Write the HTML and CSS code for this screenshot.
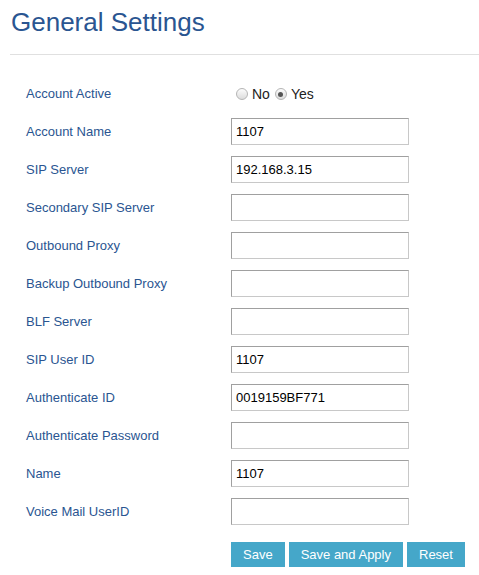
FILE: index.html
```html
<!DOCTYPE html>
<html>
<head>
<meta charset="utf-8">
<link rel="stylesheet" href="styles.css">
</head>
<body>
<div class="page">
  <h1 class="title">General Settings</h1>
  <div class="divider"></div>
  <form class="form">
    <div class="row">
      <label class="label">Account Active</label>
      <div class="field radios">
        <span class="radio"></span><span class="rtext">No</span>
        <span class="radio checked"></span><span class="rtext">Yes</span>
      </div>
    </div>
    <div class="row"><label class="label">Account Name</label><div class="field"><input class="input" value="1107"></div></div>
    <div class="row"><label class="label">SIP Server</label><div class="field"><input class="input" value="192.168.3.15"></div></div>
    <div class="row"><label class="label">Secondary SIP Server</label><div class="field"><input class="input" value=""></div></div>
    <div class="row"><label class="label">Outbound Proxy</label><div class="field"><input class="input" value=""></div></div>
    <div class="row"><label class="label">Backup Outbound Proxy</label><div class="field"><input class="input" value=""></div></div>
    <div class="row"><label class="label">BLF Server</label><div class="field"><input class="input" value=""></div></div>
    <div class="row"><label class="label">SIP User ID</label><div class="field"><input class="input" value="1107"></div></div>
    <div class="row"><label class="label">Authenticate ID</label><div class="field"><input class="input" value="0019159BF771"></div></div>
    <div class="row"><label class="label">Authenticate Password</label><div class="field"><input class="input" type="password" value=""></div></div>
    <div class="row"><label class="label">Name</label><div class="field"><input class="input" value="1107"></div></div>
    <div class="row"><label class="label">Voice Mail UserID</label><div class="field"><input class="input" value=""></div></div>
    <div class="buttons">
      <button type="button" class="btn">Save</button>
      <button type="button" class="btn">Save and Apply</button>
      <button type="button" class="btn">Reset</button>
    </div>
  </form>
</div>
</body>
</html>
```
FILE: styles.css
```css
html, body {
  margin: 0;
  padding: 0;
  background: #fff;
  font-family: "Liberation Sans", Arial, sans-serif;
}
.page {
  width: 479px;
}
.title {
  margin: 0;
  padding: 5px 0 0 11px;
  height: 40px;
  font-size: 26px;
  font-weight: normal;
  color: #2a5591;
  line-height: 34px;
}
.divider {
  margin: 9px 0 0 10px;
  height: 1px;
  background: #e0e0e0;
}
.form {
  padding: 19px 0 0 26px;
}
.row {
  display: flex;
  align-items: center;
  height: 38px;
}
.label {
  width: 205px;
  font-size: 13px;
  color: #2a5591;
}
.field {
  display: flex;
  align-items: center;
}
.radios {
  padding: 2px 0 0 5px;
  font-size: 14px;
  color: #222;
}
.radio {
  width: 12px;
  height: 12px;
  border-radius: 50%;
  border: 1px solid #b5b5b5;
  background: linear-gradient(#fcfcfc, #dcdcdc);
  box-sizing: border-box;
  position: relative;
  margin-right: 4px;
}
.radio.checked::after {
  content: "";
  position: absolute;
  left: 2.5px;
  top: 2.5px;
  width: 5px;
  height: 5px;
  border-radius: 50%;
  background: #555;
}
.rtext {
  margin-right: 5px;
}
.input {
  width: 178px;
  height: 27px;
  box-sizing: border-box;
  border: 1px solid #c8c8c8;
  border-top-color: #a0a0a0;
  border-left-color: #a0a0a0;
  padding: 0 4px;
  margin: 0;
  font-family: "Liberation Sans", Arial, sans-serif;
  font-size: 13px;
  color: #000;
  background: #fff;
  outline: none;
}
.buttons {
  display: flex;
  gap: 4px;
  padding: 12px 0 0 205px;
}
.btn {
  height: 25px;
  padding: 0 12px;
  border: none;
  background: #45a7c9;
  color: #fff;
  font-family: "Liberation Sans", Arial, sans-serif;
  font-size: 13px;
  cursor: pointer;
}
```
